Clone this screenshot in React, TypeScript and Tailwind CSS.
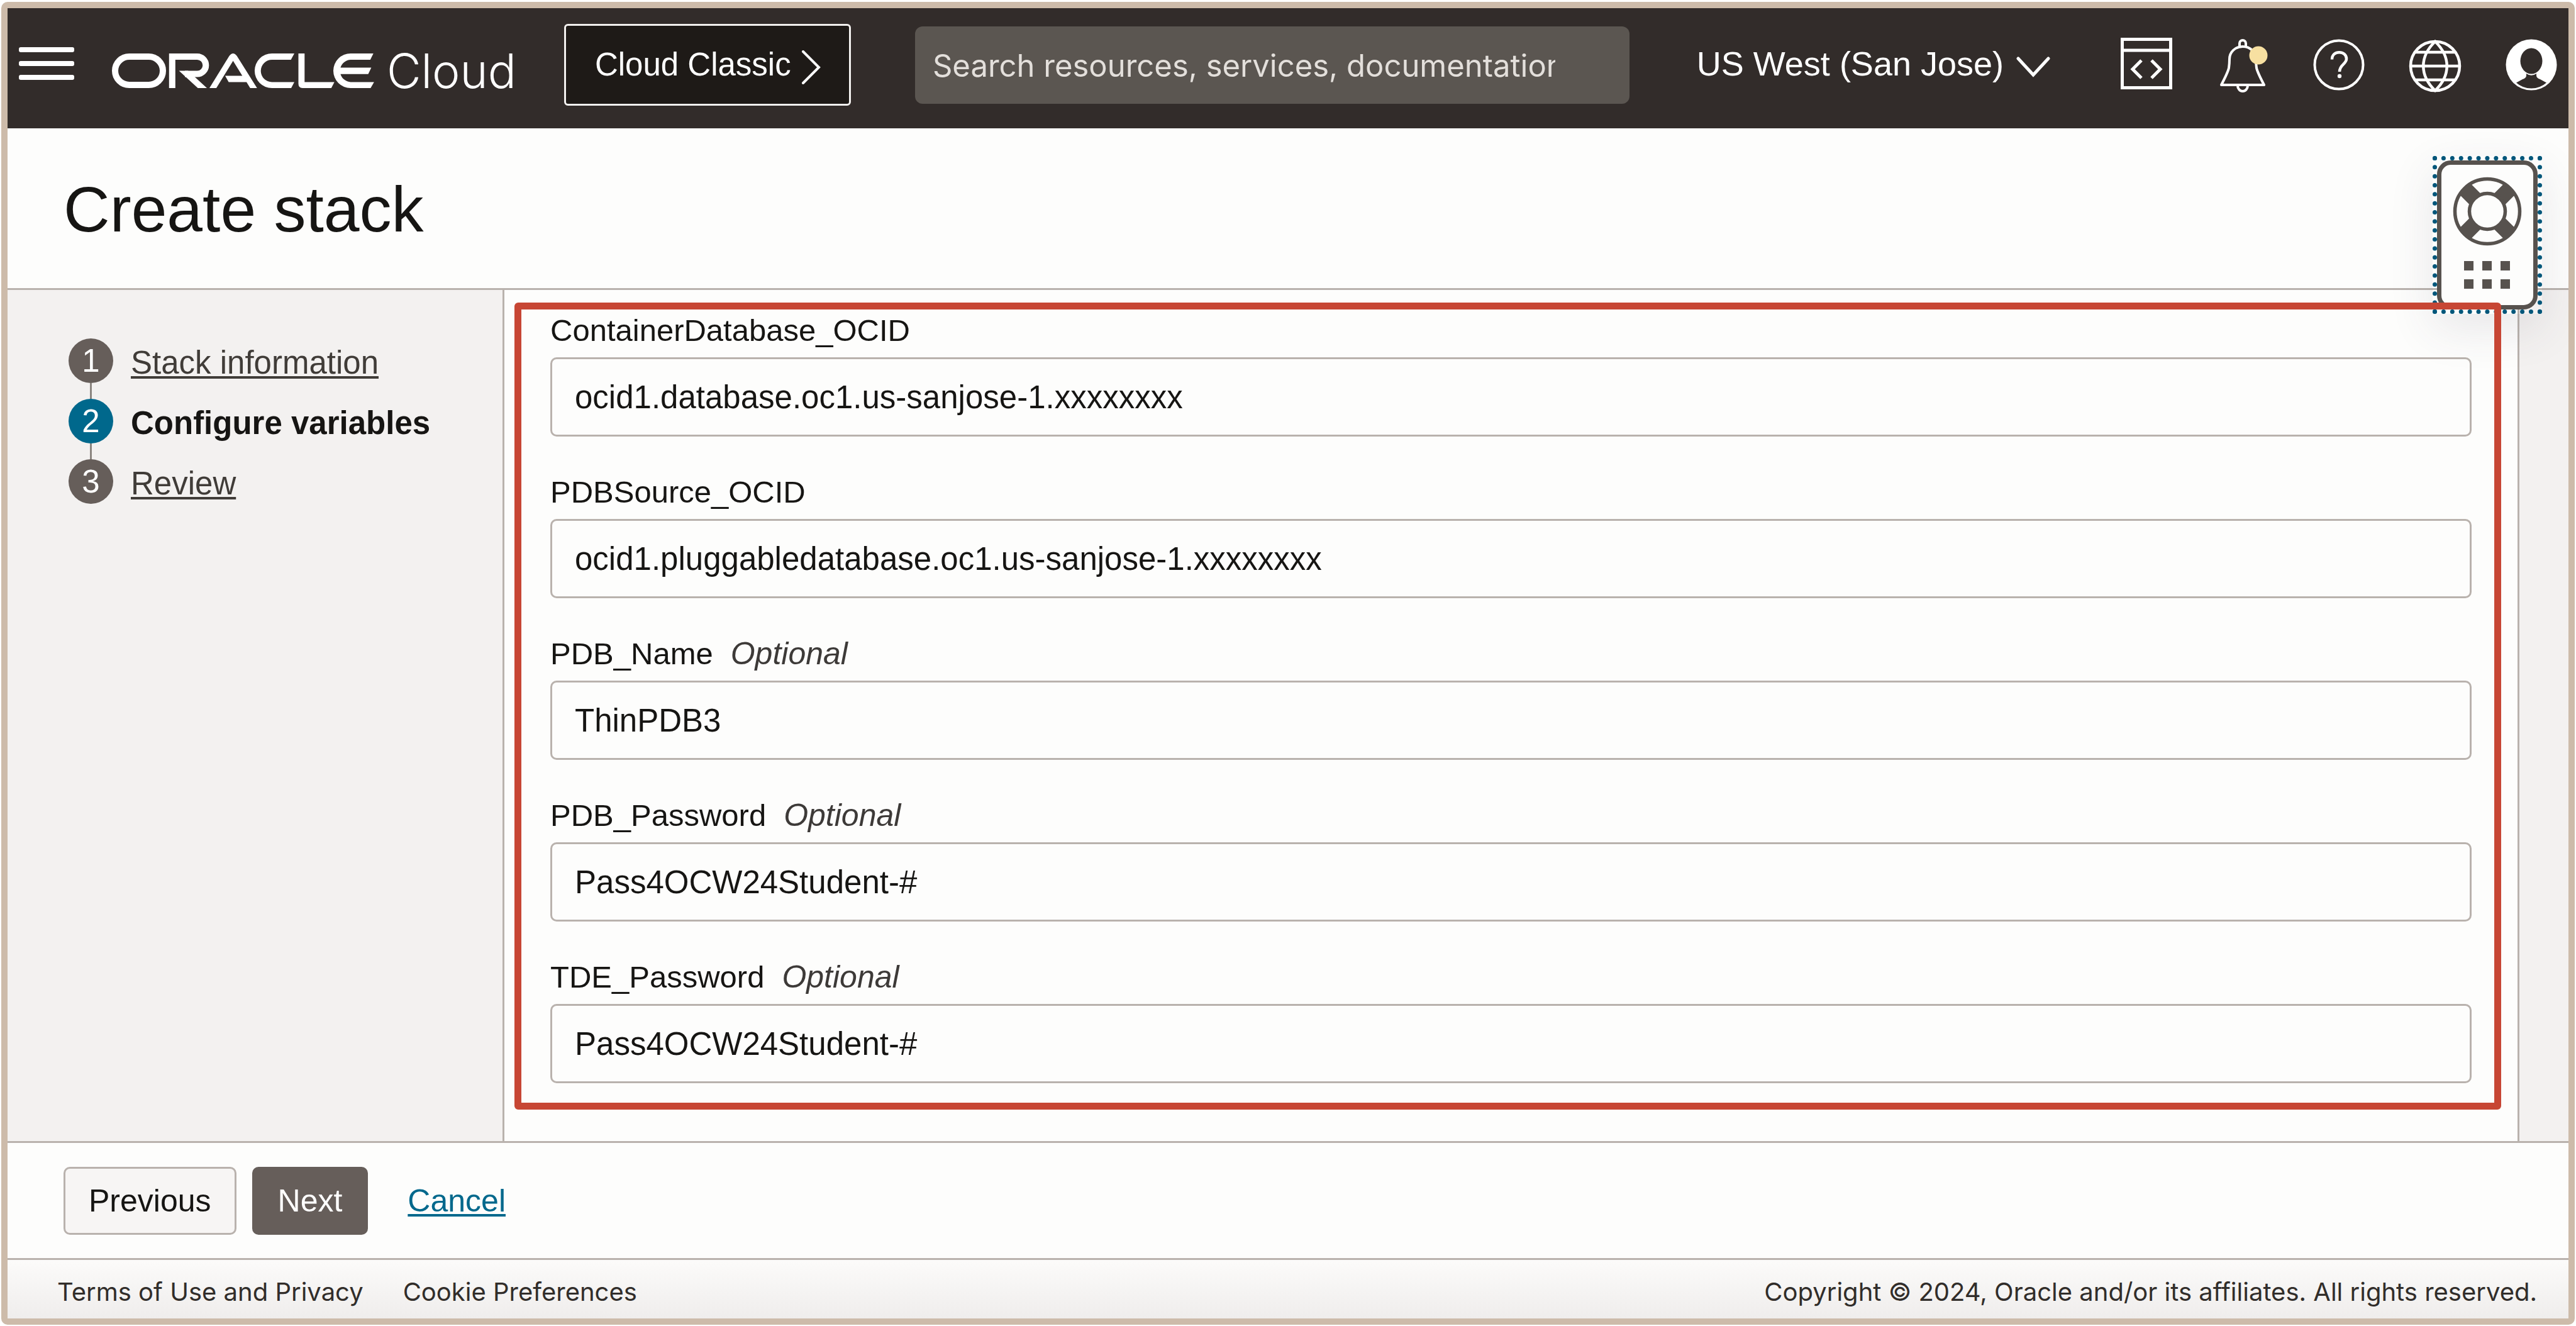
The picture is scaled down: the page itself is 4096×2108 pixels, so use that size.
import type { ReactNode } from "react";

const fields = [
  { id: "container-ocid", label: "ContainerDatabase_OCID", optional: false, value: "ocid1.database.oc1.us-sanjose-1.xxxxxxxx" },
  { id: "source-ocid", label: "PDBSource_OCID", optional: false, value: "ocid1.pluggabledatabase.oc1.us-sanjose-1.xxxxxxxx" },
  { id: "pdb-name", label: "PDB_Name", optional: true, value: "ThinPDB3" },
  { id: "pdb-password", label: "PDB_Password", optional: true, value: "Pass4OCW24Student-#" },
  { id: "tde-password", label: "TDE_Password", optional: true, value: "Pass4OCW24Student-#" },
];

const steps = [
  { label: "Stack information", current: false },
  { label: "Configure variables", current: true },
  { label: "Review", current: false },
];

function OracleLogo() {
  return (
    <svg className="h-[55px] w-[417px] shrink-0" viewBox="0 0 417 55" fill="#fff" role="img" aria-label="Oracle">
      <rect x="5" y="5" width="76" height="45" rx="22.5" fill="none" stroke="#fff" strokeWidth="10" />
      <path d="M95.8 55V5H135.5a13.8 13.8 0 0 1 0 27.6H116" fill="none" stroke="#fff" strokeWidth="10" />
      <path d="M106.6 27.6H121L151 55H136.6Z" />
      <path d="M155 55L186.5 4Q192.6 -4 198.7 4L230.7 55H219.8L214 45.4H185.6L180 35.5H207.3L192.6 11.7L166 55Z" />
      <path d="M290 0L284.6 10H254.4A17.7 17.7 0 0 0 254.4 45.4H290L285 55H254.4A27.5 27.5 0 0 1 254.4 0Z" />
      <path d="M296.5 0H306.3V45.4H353.7L348.8 55H303Q296.5 55 296.5 48Z" />
      <path d="M415.7 0L410.8 10H379.5A17.7 17.7 0 0 0 363.4 22.6H412.4L407.5 32.7H363.4A17.7 17.7 0 0 0 379.5 45.4H416.8L411.3 55H379.5A27.5 27.5 0 0 1 379.5 0Z" />
    </svg>
  );
}

function IconButton({ label, children }: { label: string; children: ReactNode }) {
  return (
    <button type="button" aria-label={label} className="h-[90px] w-[84px] shrink-0">
      <svg className="h-full w-full overflow-visible" viewBox="0 0 84 90" fill="none" stroke="#fff">
        {children}
      </svg>
    </button>
  );
}

function Header() {
  return (
    <header className="flex h-[191px] items-center bg-[#322c2a] pr-[17px] pb-[11px] pl-[18px] text-white">
      <button type="button" aria-label="Navigation menu" className="flex w-[88px] shrink-0 flex-col gap-[14px] pb-[5px]">
        <span className="h-2 w-full rounded-[3px] bg-white" />
        <span className="h-2 w-full rounded-[3px] bg-white" />
        <span className="h-2 w-full rounded-[3px] bg-white" />
      </button>
      <a href="#home" className="ml-[60px] flex shrink-0 items-baseline pt-5">
        <OracleLogo />
        <span className="ml-5 font-[Inter,sans-serif] text-[75px] leading-[88px] font-light">Cloud</span>
      </a>
      <a
        href="#classic"
        className="ml-[76px] flex h-[130px] w-[456px] shrink-0 items-center justify-between rounded-[6px] border-[3px] border-[#f3f1ef] bg-[#1e1a17] pr-[44px] pl-[46px] text-[51px] leading-[60px]"
      >
        Cloud Classic
        <svg className="mt-[7px] h-[54px] w-[32px]" viewBox="0 0 32 54" fill="none" stroke="#fff" strokeWidth="4" strokeLinecap="round">
          <path d="M3 2L28 27L3 52" />
        </svg>
      </a>
      <input
        type="text"
        aria-label="Search"
        placeholder="Search resources, services, documentation, and Marketplace"
        className="ml-[102px] h-[123px] min-w-0 flex-1 rounded-[12px] bg-[#5b5651] pt-[3px] pr-[118px] pl-[28px] font-[Inter,sans-serif] text-[49px] text-white placeholder:text-[#e3dfdb]"
      />
      <button type="button" className="ml-[107px] flex shrink-0 items-center pb-1 text-[54px] leading-[60px]">
        US West (San Jose)
        <svg className="mt-[9px] ml-[20px] h-[34px] w-[54px]" viewBox="0 0 54 34" fill="none" stroke="#fff" strokeWidth="5" strokeLinecap="round">
          <path d="M3 4L27 30L51 4" />
        </svg>
      </button>
      <div className="ml-[111px] flex shrink-0 gap-[69px]">
        <IconButton label="Developer tools">
          <path d="M3.5 4.5H80.5V81.5H3.5ZM3.5 22H80.5" strokeWidth="5" />
          <path d="M34 38L20 52L34 66M50 38L64 52L50 66" strokeWidth="5" />
        </IconButton>
        <IconButton label="Announcements">
          <path
            d="M8 77Q18.500 57 20 50Q21 43 21 36C21 25 30 16 42 16S63 25 63 36Q63 43 64 50Q65.500 57 76 77ZM37 16V11a5 5 0 0 1 10 0V16M34 78a8 9 0 0 0 16 0"
            strokeWidth="4"
            strokeLinejoin="round"
          />
          <circle cx="67" cy="30" r="14.500" fill="#f7e0a1" stroke="none" />
        </IconButton>
        <IconButton label="Help">
          <circle cx="42" cy="45" r="38.500" strokeWidth="4" />
          <path d="M31 36.500C31 21 54 22 54 35.500C54 44 43 44.500 43 56" strokeWidth="4.500" />
          <circle cx="43" cy="63" r="3.200" fill="#fff" stroke="none" />
        </IconButton>
        <IconButton label="Language">
          <g strokeWidth="4.500">
            <circle cx="42" cy="47" r="39" />
            <path d="M3 47H81M10 25H74M10 69H74" />
            <path d="M42 8C17 32 17 62 42 86C67 62 67 32 42 8Z" />
          </g>
        </IconButton>
        <IconButton label="Profile">
          <circle cx="42" cy="45" r="40.500" fill="#fff" stroke="none" />
          <ellipse cx="42" cy="39" rx="17.500" ry="20.500" fill="#322c2a" stroke="none" />
          <path d="M34 59Q42 64.500 50 59V62Q50 66 56 68L66 73.500Q56 82.500 42 82.500T18 73.500L28 68Q34 66 34 62Z" fill="#322c2a" stroke="none" />
        </IconButton>
      </div>
    </header>
  );
}

function HelpWidget() {
  return (
    <button
      type="button"
      aria-label="Help and support"
      className="absolute top-[44px] right-[42px] border-[7px] border-dotted border-[#00567a] shadow-[0_24px_72px_rgba(60,56,80,0.11)]"
    >
      <span className="flex h-[237px] w-[160px] justify-center rounded-[22px] border-[7px] border-[#57524e] bg-[#fdfdfc] pt-[19px]">
        <svg className="h-[180px] w-[110px]" viewBox="0 0 110 180" fill="none" stroke="#57524e">
          <path d="M20 20L35 35M90 20L75 35M20 90L35 75M90 90L75 75" strokeWidth="25" />
          <circle cx="55" cy="55" r="51.500" strokeWidth="5.500" />
          <circle cx="55" cy="55" r="28.500" strokeWidth="5.500" fill="#fdfdfc" />
          <path
            d="M18 134h15v15h-15zM47 134h15v15h-15zM76 134h15v15h-15zM18 163h15v15h-15zM47 163h15v15h-15zM76 163h15v15h-15z"
            fill="#57524e"
            stroke="none"
          />
        </svg>
      </span>
    </button>
  );
}

export default function App() {
  return (
    <div className="flex min-h-screen bg-white px-[2px] pt-[3px] pb-[2px] font-['Liberation_Sans',Arial,sans-serif] text-[#161513]">
      <div className="flex min-w-0 flex-1 flex-col rounded-[10px] border-[10px] border-[#cdbbaa] bg-[#fdfdfc]">
        <Header />

        <div className="relative flex h-[257px] items-center border-b-[3px] border-[#b9b2ad] pt-1 pl-[89px]">
          <h1 className="text-[102px] leading-[120px]">Create stack</h1>
          <HelpWidget />
        </div>

        <div className="flex flex-1">
          <nav aria-label="Steps" className="w-[790px] shrink-0 border-r-[3px] border-[#b9b2ad] bg-[#f3f1f0] pt-[77px] pl-[97px]">
            <ol className="text-[51px] leading-[71px]">
              {steps.map((step, i) => (
                <li key={step.label}>
                  {i > 0 && <span className="ml-[34px] block h-[25px] w-[3px] bg-[#8b8580]" />}
                  <a href={`#step-${i + 1}`} aria-current={step.current ? "step" : undefined} className="flex h-[71px] gap-[28px]">
                    <span
                      className={
                        step.current
                          ? "size-[71px] rounded-full bg-[#00688c] text-center text-white"
                          : "size-[71px] rounded-full bg-[#665e5a] text-center text-white"
                      }
                    >
                      {i + 1}
                    </span>
                    <span
                      className={
                        step.current ? "pt-[3px] font-bold" : "pt-[3px] text-[#403c38] underline decoration-[4px] underline-offset-[4px]"
                      }
                    >
                      {step.label}
                    </span>
                  </a>
                </li>
              ))}
            </ol>
          </nav>

          <main className="min-w-0 flex-1 pt-5 pr-[26px] pl-[16px]">
            <form className="relative flex flex-col gap-[58px] rounded-[6px] border-[11px] border-[#c74634] pt-[3px] pr-[36px] pb-[31px] pl-[46px]">
              {fields.map((f) => (
                <div key={f.id} className="flex flex-col gap-[13px]">
                  <label htmlFor={f.id} className="text-[49px] leading-[60px]">
                    {f.label}
                    {f.optional && <em className="ml-[28px] text-[50px] text-[#3d3a38]">Optional</em>}
                  </label>
                  <input
                    id={f.id}
                    type="text"
                    defaultValue={f.value}
                    className="h-[126px] w-full rounded-[10px] border-[3px] border-[#b9b2ad] bg-transparent px-[36px] text-[51px]"
                  />
                </div>
              ))}
            </form>
          </main>

          <div className="w-[81px] shrink-0 border-l-[3px] border-[#b9b2ad] bg-[#f3f1f0]" />
        </div>

        <div className="flex h-[186px] items-center border-t-[3px] border-[#b9b2ad] pl-[89px] text-[50px] leading-[60px]">
          <button type="button" className="h-[108px] rounded-[10px] border-[3px] border-[#b9b2ad] bg-[#f7f5f4] px-[37px]">
            Previous
          </button>
          <button type="button" className="ml-[25px] h-[108px] rounded-[10px] bg-[#665e5a] px-[41px] text-white">
            Next
          </button>
          <a href="#cancel" className="ml-[63px] text-[#00688c] underline decoration-[4px] underline-offset-[4px]">
            Cancel
          </a>
        </div>

        <footer className="flex h-[96px] items-center border-t-[3px] border-[#b9b2ad] bg-linear-to-b from-[#fcfbfa] to-[#efedec] pt-2 pr-[50px] pl-[79px] font-[Inter,sans-serif] text-[40px] leading-[48px] text-[#312d2a]">
          <a href="#terms">Terms of Use and Privacy</a>
          <a href="#cookies" className="ml-[63px]">
            Cookie Preferences
          </a>
          <p className="ml-auto">Copyright © 2024, Oracle and/or its affiliates. All rights reserved.</p>
        </footer>
      </div>
    </div>
  );
}
